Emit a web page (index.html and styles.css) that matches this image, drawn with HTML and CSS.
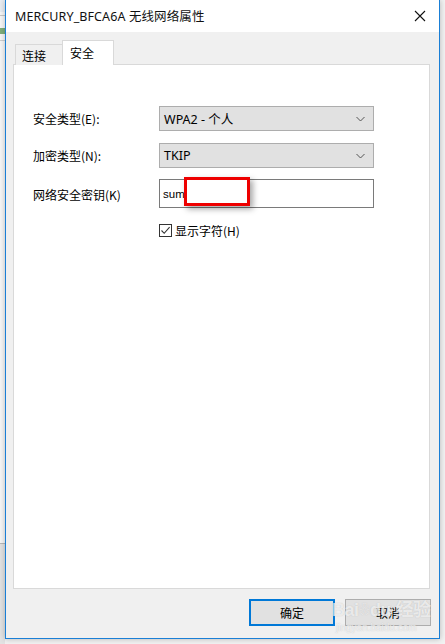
FILE: index.html
```html
<!DOCTYPE html>
<html lang="zh">
<head>
<meta charset="utf-8">
<title>MERCURY_BFCA6A 无线网络属性</title>
<link rel="stylesheet" href="styles.css">
</head>
<body>
<div class="screen">
  <div class="behind">
    <div class="behind-top"></div>
    <div class="behind-line"></div>
    <div class="behind-icon"></div>
    <div class="behind-fill"></div>
    <div class="behind-bottom"></div>
  </div>
  <div class="dialog">
    <div class="titlebar">
      <span class="title">MERCURY_BFCA6A 无线网络属性</span>
      <svg class="close" width="12" height="12" viewBox="0 0 12 12"><path d="M1 1 L11 11 M11 1 L1 11" stroke="#111" stroke-width="1.1" fill="none"/></svg>
    </div>
    <div class="content">
      <div class="tabs">
        <div class="tab">连接</div>
        <div class="tab active">安全</div>
      </div>
      <div class="panel">
        <div class="form">
          <div class="row">
            <span class="label">安全类型(E):</span>
            <div class="select"><span>WPA2 - 个人</span>
              <svg class="chev" width="9" height="6" viewBox="0 0 9 6"><path d="M0.5 1 L4.5 5 L8.5 1" stroke="#555" stroke-width="1" fill="none"/></svg>
            </div>
          </div>
          <div class="row">
            <span class="label">加密类型(N):</span>
            <div class="select"><span>TKIP</span>
              <svg class="chev" width="9" height="6" viewBox="0 0 9 6"><path d="M0.5 1 L4.5 5 L8.5 1" stroke="#555" stroke-width="1" fill="none"/></svg>
            </div>
          </div>
          <div class="row">
            <span class="label">网络安全密钥(K)</span>
            <div class="input"><span>sum</span><div class="redact"></div></div>
          </div>
          <div class="row check-row">
            <span class="label"></span>
            <label class="check">
              <span class="box"><svg width="11" height="11" viewBox="0 0 11 11"><path d="M1.5 5.5 L4.2 8.3 L9.6 2.2" stroke="#333" stroke-width="1.1" fill="none"/></svg></span>
              <span>显示字符(H)</span>
            </label>
          </div>
        </div>
      </div>
      <div class="footer">
        <button class="btn primary">确定</button>
        <button class="btn">取消</button>
      </div>
    </div>
    <div class="watermark">
      <span class="wm-big">Bai<span class="paw">❀</span>du 经验</span>
      <span class="wm-small">jingyan.baidu.com</span>
    </div>
  </div>
</div>
</body>
</html>
```
FILE: styles.css
```css
html, body {
  margin: 0;
  padding: 0;
  background: #f2f2f2;
  font-family: "Noto Sans CJK SC", "Noto Sans", sans-serif;
  font-size: 12px;
  color: #000;
}
.screen {
  display: flex;
  width: 445px;
  height: 644px;
  overflow: hidden;
}
.behind {
  width: 5px;
  flex: none;
  display: flex;
  flex-direction: column;
  background: #f7f7f7;
}
.behind-top { height: 12px; background: #e9edf2; }
.behind-line { height: 1px; background: #c8c8c8; margin-top: 3px; }
.behind-icon { height: 6px; margin-top: 12px; background: #7fae7a; }
.behind-fill { flex: 1; background: #f7f7f7; border-top: 1px solid #d0d0d0; margin-top: 6px; }
.behind-bottom { height: 100px; background: #e3e3e3; border-top: 1px solid #b8b8b8; }

.dialog {
  position: relative;
  width: 433px;
  height: 638px;
  flex: none;
  border-left: 1px solid #1a7fd6;
  border-right: 1px solid #1a7fd6;
  border-bottom: 1px solid #1a7fd6;
  background: #f0f0f0;
  display: flex;
  flex-direction: column;
  box-shadow: 0 0 6px rgba(0,0,0,0.25);
}
.titlebar {
  height: 31px;
  background: #fff;
  display: flex;
  align-items: center;
  justify-content: space-between;
  padding: 0 9px 1px 9px;
  flex: none;
}
.title {
  font-family: "Noto Sans", "Noto Sans CJK SC", sans-serif;
  font-size: 12.5px;
  color: #111;
  letter-spacing: 0.1px;
}
.close { margin-right: 4px; }
.content {
  flex: 1;
  display: flex;
  flex-direction: column;
  padding: 9px 8px 0 7px;
}
.tabs {
  display: flex;
  align-items: flex-end;
  height: 24px;
  padding-left: 2px;
  position: relative;
  z-index: 1;
  margin-bottom: -1px;
}
.tab {
  height: 20px;
  padding: 0 0 0 6px;
  width: 40px;
  border: 1px solid #d9d9d9;
  border-bottom: none;
  background: #f0f0f0;
  line-height: 21px;
  font-size: 12px;
}
.tab.active {
  height: 24px;
  width: 43px;
  padding-left: 7px;
  background: #fff;
  border-left: 1px solid #d9d9d9;
  margin-left: -1px;
  line-height: 23px;
}
.panel {
  height: 523px;
  background: #fff;
  border: 1px solid #d9d9d9;
  margin-right: 1px;
}
.form {
  padding: 41px 0 0 19px;
  display: flex;
  flex-direction: column;
  gap: 12px;
}
.row {
  display: flex;
  align-items: center;
}
.label {
  width: 126px;
  flex: none;
  font-size: 12px;
  color: #000;
}
.select {
  width: 201px;
  height: 23px;
  border: 1px solid #adadad;
  background: #e1e1e1;
  display: flex;
  align-items: center;
  justify-content: space-between;
  padding: 0 8px 0 4px;
  box-sizing: content-box;
  font-family: "Noto Sans", "Noto Sans CJK SC", sans-serif;
  font-size: 12.5px;
}
.input {
  position: relative;
  width: 210px;
  height: 27px;
  border: 1px solid #7a7a7a;
  background: #fff;
  padding-left: 3px;
  display: flex;
  align-items: center;
  font-family: "Liberation Sans", sans-serif;
  font-size: 11.5px;
  margin-top: -1px;
}
.redact {
  position: absolute;
  left: 24px;
  top: -3px;
  width: 60px;
  height: 23px;
  border: 3px solid #ee0000;
  background: #fff;
  box-shadow: 3px 3px 6px rgba(0,0,0,0.35);
}
.check-row { margin-top: 2px; }
.check {
  display: flex;
  align-items: center;
  gap: 3px;
  font-size: 12px;
}
.box {
  width: 11px;
  height: 11px;
  border: 1px solid #333;
  display: flex;
  background: #fff;
}
.footer {
  display: flex;
  justify-content: flex-end;
  gap: 10px;
  padding: 10px 0 0 0;
}
.btn {
  width: 86px;
  height: 27px;
  border: 1px solid #adadad;
  background: #e1e1e1;
  font-family: "Noto Sans CJK SC", sans-serif;
  font-size: 12px;
  color: #000;
  padding: 0;
}
.btn.primary {
  border: 2px solid #0078d7;
}
.watermark {
  position: absolute;
  left: 326px;
  top: 598px;
  display: flex;
  flex-direction: column;
  pointer-events: none;
  color: rgba(255,255,255,0.7);
  text-shadow: 0 0 1px rgba(150,150,150,0.55);
}
.wm-big {
  font-family: "Liberation Sans", "Noto Sans CJK SC", sans-serif;
  font-size: 18px;
  font-weight: bold;
  line-height: 24px;
  letter-spacing: -0.5px;
  white-space: nowrap;
}
.paw { font-size: 12px; vertical-align: top; }
.wm-small {
  font-family: "Liberation Sans", sans-serif;
  font-size: 10px;
  line-height: 12px;
  padding-left: 4px;
}
```
